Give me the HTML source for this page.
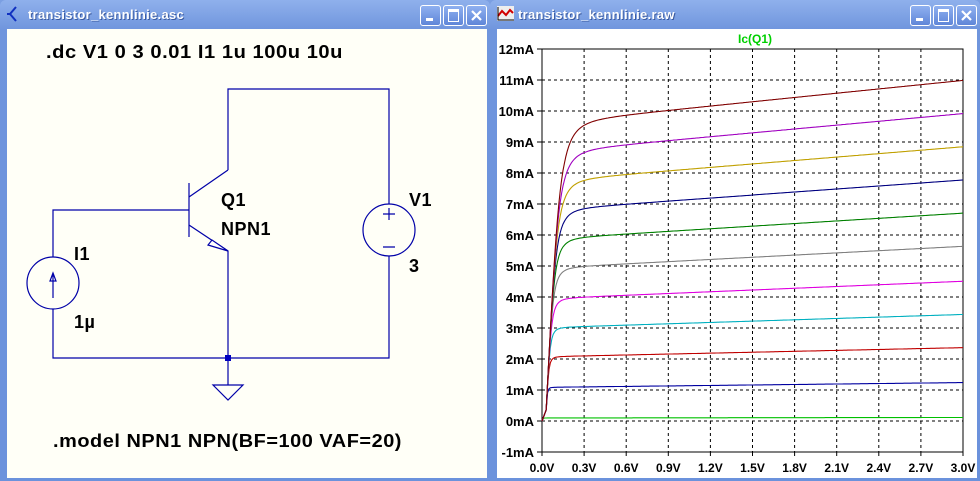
<!DOCTYPE html>
<html><head><meta charset="utf-8"><style>
html,body{margin:0;padding:0;width:980px;height:481px;overflow:hidden;background:#7b9fe2}
.win{position:absolute;top:0;height:481px;background:linear-gradient(#8fb0ec,#6f95dd 30px,#6b92dc);border-radius:6px 6px 0 0}
.title{position:absolute;top:7px;left:28px;color:#fff;font:bold 13px "Liberation Sans",sans-serif;text-shadow:1px 1px 0 #3a5aa0;letter-spacing:0.3px}
.btn{position:absolute;top:5px;width:19px;height:19px;border:1px solid #fff;border-radius:3px;background:linear-gradient(#8fb0f0,#5f86d8)}
.content{position:absolute;top:29px;bottom:4px;left:6px;right:4px}
</style></head><body>
<div class="win" style="left:0;width:490px">
 <svg style="position:absolute;left:6px;top:5px" width="16" height="18"><path d="M10 2 L4 9 L10 16 M4 9 H1" stroke="#1030c0" stroke-width="2" fill="none"/></svg>
 <div class="title">transistor_kennlinie.asc</div>
 <div class="btn" style="left:420px"><div style="position:absolute;left:5px;top:12px;width:7px;height:3px;background:#fff"></div></div>
 <div class="btn" style="left:443px"><div style="position:absolute;left:4px;top:3px;width:9px;height:9px;border:1px solid #fff;border-top-width:3px"></div></div>
 <div class="btn" style="left:466px"><svg width="19" height="19"><path d="M5 5L14 14M14 5L5 14" stroke="#fff" stroke-width="2.2"/></svg></div>
 <div class="content" style="background:#fffff7;right:3px;left:7px;bottom:3px"></div>
 <svg style="position:absolute;left:0;top:0" width="490" height="481">
  <g stroke="#0000a8" stroke-width="1.2" fill="none">
   <path d="M228 170V89H389V204M389 256V358H53V309M53 257V210H189M189 183V237M228 170L189 197M189 225L228 251V385M213 385H243L228 400Z"/>
   <path d="M228 251L208 245L212 240Z" fill="#fff"/>
   <circle cx="53" cy="283" r="26"/><path d="M53 298V273M50 281L53 273L56 281Z"/>
   <circle cx="389" cy="230" r="26"/><path d="M383 214H395M389 208V220M383 247H395"/>
  </g>
  <rect x="225" y="355" width="6" height="6" fill="#0000c0"/>
  <g font-family="Liberation Sans,sans-serif" font-weight="bold" font-size="18" fill="#000" letter-spacing="0.5">
   <text x="46" y="58" textLength="297" lengthAdjust="spacingAndGlyphs">.dc V1 0 3 0.01 I1 1u 100u 10u</text>
   <text x="221" y="206">Q1</text><text x="221" y="235">NPN1</text>
   <text x="409" y="206">V1</text><text x="409" y="272">3</text>
   <text x="74" y="260">I1</text><text x="74" y="328">1µ</text>
   <text x="53" y="447" textLength="349" lengthAdjust="spacingAndGlyphs">.model NPN1 NPN(BF=100 VAF=20)</text>
  </g>
 </svg>
</div>
<div class="win" style="left:490px;width:490px">
 <svg style="position:absolute;left:7px;top:6px" width="18" height="16"><rect x="0" y="0" width="17" height="15" fill="#eee"/><path d="M1 10L5 5L9 9L13 4L16 7" stroke="#d00000" stroke-width="2" fill="none"/><path d="M1 1V14H17" stroke="#000" fill="none"/></svg>
 <div class="title">transistor_kennlinie.raw</div>
 <div class="btn" style="left:420px"><div style="position:absolute;left:5px;top:12px;width:7px;height:3px;background:#fff"></div></div>
 <div class="btn" style="left:443px"><div style="position:absolute;left:4px;top:3px;width:9px;height:9px;border:1px solid #fff;border-top-width:3px"></div></div>
 <div class="btn" style="left:466px"><svg width="19" height="19"><path d="M5 5L14 14M14 5L5 14" stroke="#fff" stroke-width="2.2"/></svg></div>
 <div class="content" style="background:#fff;left:7px;right:3px;bottom:3px"></div>
 <svg id="plot" style="position:absolute;left:0;top:0" width="490" height="481"></svg>
</div>
<script>
var s=document.getElementById('plot'),h='';
var X0=52,X1=473,Y0=421,PX=(X1-X0)/3,PY=31;
function fx(v){return X0+v*PX} function fy(i){return Y0-i*PY}
for(var k=1;k<10;k++){var x=fx(k*0.3).toFixed(1);h+='<line x1="'+x+'" y1="49" x2="'+x+'" y2="452" stroke="#000" stroke-dasharray="3,3"/>';}
for(var m=-1;m<=12;m++){var y=fy(m);if(m>-1&&m<12)h+='<line x1="'+X0+'" y1="'+y+'" x2="'+X1+'" y2="'+y+'" stroke="#000" stroke-dasharray="3,3"/>';
 h+='<line x1="'+(X0-5)+'" y1="'+y+'" x2="'+X0+'" y2="'+y+'" stroke="#000"/>';
 h+='<text x="'+(X0-8)+'" y="'+(y+5)+'" text-anchor="end" font-size="13" font-weight="bold" font-family="Liberation Sans,sans-serif">'+m+'mA</text>';}
for(var k=0;k<=10;k++){var x=fx(k*0.3);h+='<line x1="'+x+'" y1="452" x2="'+x+'" y2="456" stroke="#000"/><text x="'+x+'" y="472" text-anchor="middle" font-size="12" font-weight="bold" font-family="Liberation Sans,sans-serif">'+(k*0.3).toFixed(1)+'V</text>';}
h+='<rect x="'+X0+'" y="49" width="'+(X1-X0)+'" height="403" fill="none" stroke="#000"/>';
h+='<text x="265" y="43" text-anchor="middle" font-size="12" font-weight="bold" fill="#00d000" font-family="Liberation Sans,sans-serif">Ic(Q1)</text>';
var cols=['#00c000','#0000a0','#c00000','#00b0c0','#e000e0','#808080','#008000','#000080','#c0a000','#a000c0','#800000'];
var P=[0.1,1.1,2.1,3.05,4.0,5.0,5.95,6.9,7.85,8.8,9.75];
for(var c=0;c<11;c++){var d='';for(var i=0;i<=300;i++){var v=i*0.01;var a=P[c]*(1+0.047*(v-0.3));var e=Math.max(0.0001,75*(v-0.03))+12*v;var I=a*e/Math.pow(Math.pow(a,3)+Math.pow(e,3),1/3);if(v==0)I=0;d+=(i?'L':'M')+fx(v).toFixed(1)+' '+fy(I).toFixed(1);}
 h+='<path d="'+d+'" stroke="'+cols[c]+'" fill="none" stroke-width="1.1"/>';}
s.innerHTML=h;
</script>
</body></html>
